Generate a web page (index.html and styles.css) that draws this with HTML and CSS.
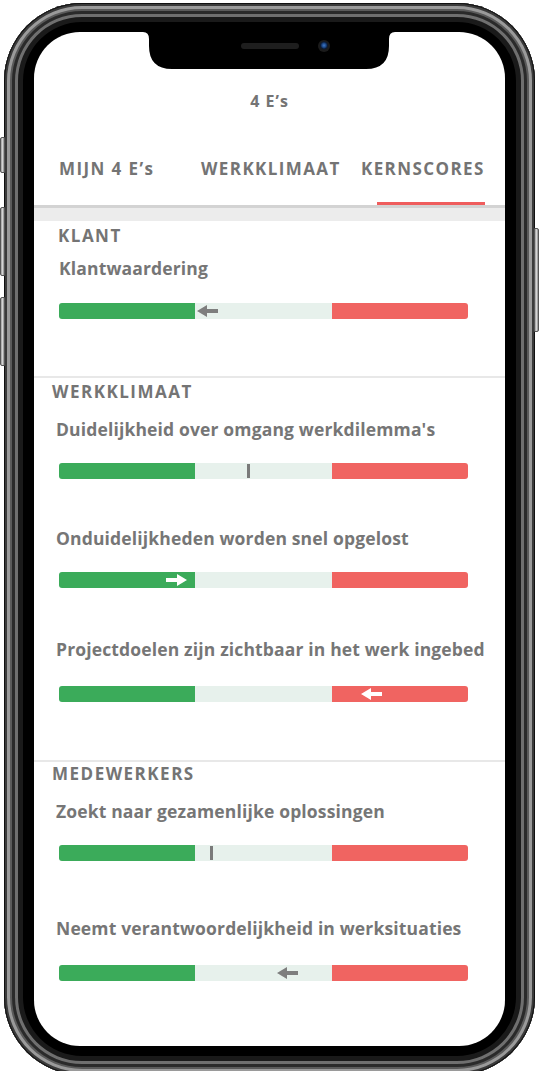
FILE: index.html
```html
<!DOCTYPE html>
<html lang="nl">
<head>
<meta charset="utf-8">
<title>4 E's – Kernscores</title>
<link rel="stylesheet" href="styles.css">
</head>
<body>
<div class="phone">
  <span class="side-btn side-btn--mute"></span>
  <span class="side-btn side-btn--vol-up"></span>
  <span class="side-btn side-btn--vol-down"></span>
  <span class="side-btn side-btn--power"></span>

  <div class="screen">
    <div class="notch">
      <svg class="notch-shape" width="252" height="37" viewBox="0 0 252 37" aria-hidden="true">
        <path d="M0 0 H252 Q246 0 246 7 V14 Q246 37 223 37 H29 Q6 37 6 14 V7 Q6 0 0 0 Z" fill="#000"/>
      </svg>
      <span class="speaker"></span>
      <span class="camera"></span>
    </div>

    <header class="title">4 E’s</header>

    <nav class="tabs">
      <div class="tab">MIJN 4 E’s</div>
      <div class="tab">WERKKLIMAAT</div>
      <div class="tab tab--active">KERNSCORES<span class="tab-indicator"></span></div>
    </nav>
    <div class="band"></div>

    <section class="group group--klant">
      <h2 class="group-title">KLANT</h2>
      <div class="metric">
        <h3 class="label">Klantwaardering</h3>
        <div class="bar">
          <span class="seg seg--good"></span><span class="seg seg--mid"></span><span class="seg seg--bad"></span>
          <svg class="marker marker--arrow marker--grey" style="left:138px" width="21" height="12" viewBox="0 0 21 12"><path d="M0 6 L10 0 V4 H21 V8 H10 V12 Z"/></svg>
        </div>
      </div>
    </section>

    <section class="group group--werk">
      <h2 class="group-title">WERKKLIMAAT</h2>
      <div class="metric">
        <h3 class="label">Duidelijkheid over omgang werkdilemma's</h3>
        <div class="bar">
          <span class="seg seg--good"></span><span class="seg seg--mid"></span><span class="seg seg--bad"></span>
          <span class="marker marker--tick" style="left:188px"></span>
        </div>
      </div>
      <div class="metric">
        <h3 class="label">Onduidelijkheden worden snel opgelost</h3>
        <div class="bar">
          <span class="seg seg--good"></span><span class="seg seg--mid"></span><span class="seg seg--bad"></span>
          <svg class="marker marker--arrow marker--white" style="left:107px" width="21" height="12" viewBox="0 0 21 12"><path d="M21 6 L11 0 V4 H0 V8 H11 V12 Z"/></svg>
        </div>
      </div>
      <div class="metric metric--loose">
        <h3 class="label">Projectdoelen zijn zichtbaar in het werk ingebed</h3>
        <div class="bar">
          <span class="seg seg--good"></span><span class="seg seg--mid"></span><span class="seg seg--bad"></span>
          <svg class="marker marker--arrow marker--white" style="left:302px" width="21" height="12" viewBox="0 0 21 12"><path d="M0 6 L10 0 V4 H21 V8 H10 V12 Z"/></svg>
        </div>
      </div>
    </section>

    <section class="group group--mede">
      <h2 class="group-title">MEDEWERKERS</h2>
      <div class="metric">
        <h3 class="label">Zoekt naar gezamenlijke oplossingen</h3>
        <div class="bar">
          <span class="seg seg--good"></span><span class="seg seg--mid"></span><span class="seg seg--bad"></span>
          <span class="marker marker--tick" style="left:151px"></span>
        </div>
      </div>
      <div class="metric metric--loose">
        <h3 class="label">Neemt verantwoordelijkheid in werksituaties</h3>
        <div class="bar">
          <span class="seg seg--good"></span><span class="seg seg--mid"></span><span class="seg seg--bad"></span>
          <svg class="marker marker--arrow marker--grey" style="left:218px" width="21" height="12" viewBox="0 0 21 12"><path d="M0 6 L10 0 V4 H21 V8 H10 V12 Z"/></svg>
        </div>
      </div>
    </section>
  </div>
</div>
</body>
</html>
```

FILE: styles.css
```css
* { box-sizing: border-box; }

html, body {
  margin: 0;
  padding: 0;
  background: #fff;
}

body {
  width: 539px;
  height: 1071px;
  overflow: hidden;
  font-family: "Open Sans", "Liberation Sans", sans-serif;
  color: #777;
}

/* ---------- phone frame ---------- */
.phone {
  position: relative;
  width: 531px;
  margin: 3px 0 0 4px;
  padding: 29px 30px;
  border-radius: 78px;
  background: #000;
  box-shadow:
    inset 0 0 0 1px #111,
    inset 0 0 0 3px #3a3a3a,
    inset 0 0 0 6px #9a9a9a,
    inset 0 0 0 8px #5a5a5a,
    inset 0 0 0 11px #2a2a2a,
    inset 0 0 0 14px #6f6f6f,
    inset 0 0 0 19px #1a1a1a;
}

.side-btn {
  position: absolute;
  width: 5px;
  background: linear-gradient(90deg, #9b9b9b, #d4d4d4 50%, #8a8a8a);
  border: 1px solid #555;
}
.side-btn--mute     { left: -4px; top: 134px; height: 36px; border-radius: 2px 0 0 2px; }
.side-btn--vol-up   { left: -4px; top: 204px; height: 69px; border-radius: 2px 0 0 2px; }
.side-btn--vol-down { left: -4px; top: 294px; height: 69px; border-radius: 2px 0 0 2px; }
.side-btn--power    { right: -4px; top: 225px; height: 104px; border-radius: 0 2px 2px 0; }

.screen {
  position: relative;
  width: 471px;
  height: 1014px;
  background: #fff;
  border-radius: 46px;
  overflow: hidden;
}

.notch {
  position: absolute;
  top: 0;
  left: 109px;
  width: 252px;
  height: 37px;
}
.notch-shape { display: block; }
.speaker {
  position: absolute;
  left: 98px;
  top: 11px;
  width: 58px;
  height: 6px;
  border-radius: 3px;
  background: #1e1e1e;
}
.camera {
  position: absolute;
  left: 175px;
  top: 8px;
  width: 12px;
  height: 12px;
  border-radius: 50%;
  background: radial-gradient(circle at 50% 45%, #3f78c8 0, #1d4a8a 2px, #0b1a33 3.5px, #1b1b1b 4.5px);
}

/* ---------- header & tabs ---------- */
.title {
  padding-top: 59px;
  font-size: 16px;
  line-height: 20px;
  font-weight: 700;
  letter-spacing: 1px;
  text-align: center;
  color: #747474;
}

.tabs {
  display: grid;
  grid-template-columns: 142px 160px 1fr;
  padding: 48px 0 0 25px;
  border-bottom: 3px solid #d3d3d3;
}
.tab {
  display: flex;
  flex-direction: column;
  font-size: 17px;
  line-height: 20px;
  font-weight: 700;
  letter-spacing: 1.4px;
  white-space: nowrap;
  color: #747474;
}
.tab-indicator {
  display: block;
  width: 108px;
  height: 3px;
  margin: 23px 0 0 16px;
  background: #ef5d5d;
}

.band {
  height: 13px;
  background: #ececec;
}

/* ---------- groups ---------- */
.group {
  padding: 4px 0 0 18px;
}
.group + .group {
  border-top: 2px solid #e8e8e8;
}
.group--klant { padding-top: 5px; padding-bottom: 57px; }
.group--werk  { padding-bottom: 58.5px; }
.group--mede  { padding-top: 2px; }

.group-title {
  margin: 0;
  font-size: 17px;
  line-height: 20px;
  font-weight: 700;
  letter-spacing: 1.5px;
  color: #747474;
}
.group--klant .group-title { margin-left: 6px; }

.metric { margin-top: 17px; }
.group--klant .metric { margin-top: 12px; }
.metric + .metric { margin-top: 49px; }
.metric + .metric--loose { margin-top: 51px; }
.group--mede .metric + .metric--loose { margin-top: 57px; }

.label {
  margin: 0 0 24px 4px;
  font-size: 17.5px;
  line-height: 20px;
  font-weight: 700;
  letter-spacing: 0.15px;
  white-space: nowrap;
  color: #767676;
}
.metric--loose .label { margin-bottom: 26.5px; }
.group--klant .label { margin-left: 7px; margin-bottom: 25px; }

/* ---------- score bar ---------- */
.bar {
  position: relative;
  display: flex;
  width: 409px;
  height: 16px;
  margin-left: 7px;
  border-radius: 3px;
  overflow: hidden;
}
.seg { flex: 1; }
.seg--good { background: #3bab5a; }
.seg--mid  { background: #e7f1ec; }
.seg--bad  { background: #f06461; }

.marker {
  position: absolute;
  top: 2px;
}
.marker--grey  { fill: #7e7e7e; }
.marker--white { fill: #fff; }
.marker--tick {
  top: 1px;
  width: 3px;
  height: 14px;
  background: #7a7a7a;
}
```
